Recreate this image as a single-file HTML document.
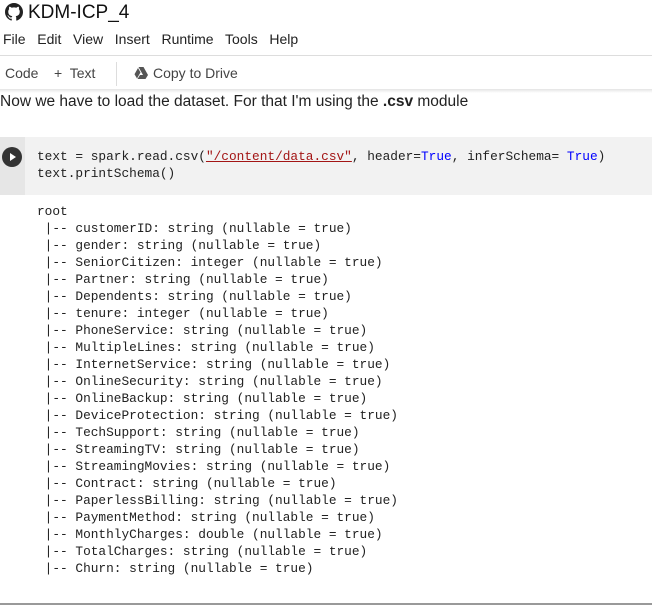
<!DOCTYPE html>
<html><head><style>
body{margin:0;width:652px;height:605px;overflow:hidden;background:#fff;font-family:"Liberation Sans",sans-serif;color:#212121;position:relative}
.a{position:absolute;white-space:pre}
.m{font-family:"Liberation Mono",monospace;font-size:12.8px;color:#212121}
</style></head><body>
<svg class="a" style="left:5px;top:3px" width="18" height="18" viewBox="0 0 16 16"><path fill="#222" d="M8 0C3.580 0 0 3.58 0 8c0 3.54 2.29 6.53 5.47 7.59.4.07.55-.17.55-.38v-1.33c-2.23.48-2.7-1.070-2.7-1.07-.36-.92-.89-1.17-.89-1.17-.73-.5.06-.49.06-.49.8.06 1.23.83 1.23.83.71 1.22 1.87.87 2.33.66.07-.52.28-.87.5-1.07-1.78-.2-3.65-.89-3.650-3.95 0-.87.31-1.59.82-2.15-.08-.2-.36-1.02.08-2.12 0 0 .67-.21 2.2.82a7.6 7.6 0 014 0c1.53-1.04 2.2-.82 2.2-.82.44 1.1.16 1.92.08 2.12.51.56.82 1.27.82 2.15 0 3.07-1.87 3.75-3.65 3.95.29.25.54.73.54 1.48v2.2c0 .21.15.46.55.38A8.01 8.01 0 0016 8c0-4.42-3.58-8-8-8z"/></svg>
<div class="a" style="left:28px;top:2px;font-size:19px;color:#111">KDM-ICP_4</div>
<div class="a" style="left:3px;top:31px;font-size:14px">File&nbsp;&nbsp; Edit&nbsp;&nbsp; View&nbsp;&nbsp; Insert&nbsp;&nbsp; Runtime&nbsp;&nbsp; Tools&nbsp;&nbsp; Help</div>
<div class="a" style="left:0;top:55px;width:652px;height:1px;background:#ddd"></div>
<div class="a" style="left:5px;top:65px;font-size:14px;color:#444">Code&nbsp;&nbsp;&nbsp; +&nbsp; Text</div>
<div class="a" style="left:116px;top:62px;width:1px;height:24px;background:#ddd"></div>
<svg class="a" style="left:134px;top:67px" width="14" height="12" viewBox="0 0 14 12"><path fill="#555" d="M4.5 0h5l4.5 8h-5zM4 1l2.5 4.4L3 11.5 0.5 7.2zM6 8h8l-2.5 4h-8z"/></svg>
<div class="a" style="left:153px;top:65px;font-size:14px;color:#444">Copy to Drive</div>
<div class="a" style="left:0;top:89px;width:652px;height:4px;background:linear-gradient(#e4e4e4,#fff)"></div>
<div class="a" style="left:0;top:93px;font-size:15.5px;color:#222">Now we have to load the dataset. For that I'm using the <b>.csv</b> module</div>
<div class="a" style="left:0;top:137px;width:652px;height:58px;background:#f2f2f2"></div>
<div class="a" style="left:0;top:137px;width:25px;height:58px;background:#e6e6e6"></div>
<div class="a" style="left:2px;top:147px;width:20px;height:20px;border-radius:50%;background:#333"></div>
<svg class="a" style="left:8px;top:152px" width="10" height="10"><path d="M2 1l6 4-6 4z" fill="#fff"/></svg>
<div class="a m" style="left:37px;top:148px;line-height:17px">text = spark.read.csv(<span style="color:#a31515;text-decoration:underline;text-decoration-color:#a31515">"/content/data.csv"</span>, header=<span style="color:#00f">True</span>, inferSchema= <span style="color:#00f">True</span>)
text.printSchema()</div>
<div class="a m" style="left:37px;top:203px;line-height:17px">root
 |-- customerID: string (nullable = true)
 |-- gender: string (nullable = true)
 |-- SeniorCitizen: integer (nullable = true)
 |-- Partner: string (nullable = true)
 |-- Dependents: string (nullable = true)
 |-- tenure: integer (nullable = true)
 |-- PhoneService: string (nullable = true)
 |-- MultipleLines: string (nullable = true)
 |-- InternetService: string (nullable = true)
 |-- OnlineSecurity: string (nullable = true)
 |-- OnlineBackup: string (nullable = true)
 |-- DeviceProtection: string (nullable = true)
 |-- TechSupport: string (nullable = true)
 |-- StreamingTV: string (nullable = true)
 |-- StreamingMovies: string (nullable = true)
 |-- Contract: string (nullable = true)
 |-- PaperlessBilling: string (nullable = true)
 |-- PaymentMethod: string (nullable = true)
 |-- MonthlyCharges: double (nullable = true)
 |-- TotalCharges: string (nullable = true)
 |-- Churn: string (nullable = true)</div>
<div class="a" style="left:0;top:603px;width:652px;height:2px;background:#999"></div>
</body></html>
